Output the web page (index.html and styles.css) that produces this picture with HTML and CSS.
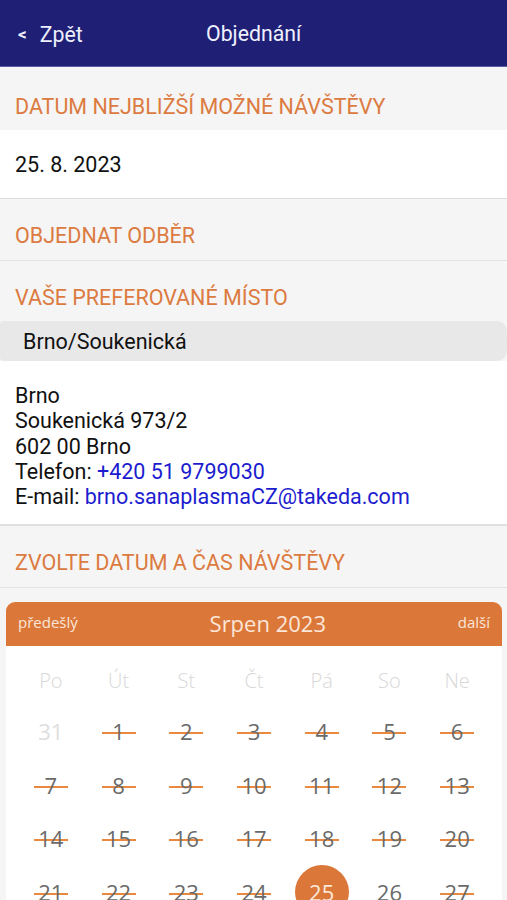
FILE: index.html
```html
<!DOCTYPE html>
<html lang="cs">
<head>
<meta charset="utf-8">
<link rel="stylesheet" href="styles.css">
</head>
<body>
<header class="topbar">
  <div class="back"><span class="chev">&lt;</span> Zpět</div>
  <div class="title">Objednání</div>
</header>

<div class="sec sec-first">DATUM NEJBLIŽŠÍ MOŽNÉ NÁVŠTĚVY</div>
<div class="row-date">25. 8. 2023</div>
<div class="sec sec-b">OBJEDNAT ODBĚR</div>
<div class="sec sec-c">VAŠE PREFEROVANÉ MÍSTO</div>
<div class="pill">Brno/Soukenická</div>
<div class="address">
  <div>Brno</div>
  <div>Soukenická 973/2</div>
  <div>602 00 Brno</div>
  <div>Telefon: <a class="link">+420 51 9799030</a></div>
  <div>E-mail: <a class="link">brno.sanaplasmaCZ@takeda.com</a></div>
</div>
<div class="sec sec-d">ZVOLTE DATUM A ČAS NÁVŠTĚVY</div>

<div class="cal-wrap">
  <div class="cal">
    <div class="cal-head">
      <span class="nav">předešlý</span>
      <span class="month">Srpen 2023</span>
      <span class="nav">další</span>
    </div>
    <div class="cal-body">
      <div class="grid wd">
        <span>Po</span><span>Út</span><span>St</span><span>Čt</span><span>Pá</span><span>So</span><span>Ne</span>
      </div>
      <div class="grid days">
        <span class="d muted">31</span>
        <span class="d x"><i>1</i></span>
        <span class="d x"><i>2</i></span>
        <span class="d x"><i>3</i></span>
        <span class="d x"><i>4</i></span>
        <span class="d x"><i>5</i></span>
        <span class="d x"><i>6</i></span>
        <span class="d x"><i>7</i></span>
        <span class="d x"><i>8</i></span>
        <span class="d x"><i>9</i></span>
        <span class="d x"><i>10</i></span>
        <span class="d x"><i>11</i></span>
        <span class="d x"><i>12</i></span>
        <span class="d x"><i>13</i></span>
        <span class="d x"><i>14</i></span>
        <span class="d x"><i>15</i></span>
        <span class="d x"><i>16</i></span>
        <span class="d x"><i>17</i></span>
        <span class="d x"><i>18</i></span>
        <span class="d x"><i>19</i></span>
        <span class="d x"><i>20</i></span>
        <span class="d x"><i>21</i></span>
        <span class="d x"><i>22</i></span>
        <span class="d x"><i>23</i></span>
        <span class="d x"><i>24</i></span>
        <span class="d sel"><i>25</i></span>
        <span class="d"><i>26</i></span>
        <span class="d x"><i>27</i></span>
      </div>
    </div>
  </div>
</div>
</body>
</html>
```

FILE: styles.css
```css
* { box-sizing: border-box; }
html, body { margin: 0; padding: 0; }
body {
  background: #f5f5f5;
  font-family: Roboto, "Noto Sans", sans-serif;
  color: #111;
  width: 507px;
  overflow: hidden;
}
.topbar {
  height: 67px;
  background: #1f2075;
  border-bottom: 1px solid #5b5ca6;
  display: flex;
  align-items: center;
  position: relative;
  color: #eef0ff;
  font-size: 21.3px;
}
.back {
  padding-left: 18px;
  padding-top: 2px;
  display: flex;
  align-items: center;
  gap: 13px;
}
.chev {
  font-weight: 700;
  font-size: 17px;
}
.title {
  position: absolute;
  left: 206px;
  top: 22px;
  line-height: 24px;
}
.sec {
  color: #dc7b41;
  font-size: 21.5px;
  line-height: 24px;
  padding-left: 15px;
  border-bottom: 1px solid #e2e2e2;
  background: #f5f5f5;
}
.sec-first { height: 63px; padding-top: 28px; border-bottom: none; }
.sec-b { height: 62px; padding-top: 25px; }
.sec-c { height: 60px; padding-top: 25px; border-bottom: none; }
.sec-d { height: 62px; padding-top: 25px; }
.row-date {
  height: 69px;
  background: #fff;
  border-bottom: 1px solid #dcdcdc;
  padding-left: 15px;
  font-size: 21.5px;
  display: flex;
  align-items: center;
  padding-top: 1px;
}
.pill {
  height: 40px;
  background: #e8e8e8;
  border-radius: 4px 10px 10px 4px;
  padding-left: 23px;
  font-size: 21.5px;
  display: flex;
  align-items: center;
  color: #111;
}
.address {
  background: #fff;
  padding: 22px 15px 15px;
  font-size: 21.5px;
  line-height: 25.3px;
  border-bottom: 2px solid #e0e0e0;
  height: 165px;
}
.link { color: #1c1ccf; text-decoration: none; }

.cal-wrap { padding: 14px 5px 0 6px; }
.cal {
  background: #fff;
  border-radius: 9px 9px 0 0;
  overflow: hidden;
}
.cal-head {
  height: 44px;
  background: #dc773a;
  display: flex;
  align-items: center;
  justify-content: space-between;
  padding: 0 12px 0 12px;
  font-family: "Open Sans", sans-serif;
  color: #fbe6d8;
}
.nav { font-size: 15px; padding-bottom: 4px; }
.month { font-size: 22px; padding-bottom: 2px; }
.cal-body {
  padding: 10px 11px 0;
  font-family: "Open Sans", sans-serif;
}
.grid {
  display: grid;
  grid-template-columns: repeat(7, 1fr);
}
.wd span {
  height: 48px;
  display: flex;
  align-items: center;
  justify-content: center;
  color: #d8d8d8;
  font-size: 20px;
  font-weight: 300;
}
.d {
  height: 53.7px;
  display: flex;
  align-items: center;
  justify-content: center;
  font-size: 22px;
  color: #6a6a6a;
}
.d i {
  font-style: normal;
  display: inline-flex;
  justify-content: center;
  width: 34px;
}
.d.muted { color: #dedede; }
.d.x i {
  background: linear-gradient(#e8893f, #e8893f) 0 16px / 100% 2px no-repeat;
}
.d.sel i {
  width: 54px;
  height: 54px;
  border-radius: 50%;
  background: #dc773a;
  color: #fde8da;
  align-items: center;
}
```
